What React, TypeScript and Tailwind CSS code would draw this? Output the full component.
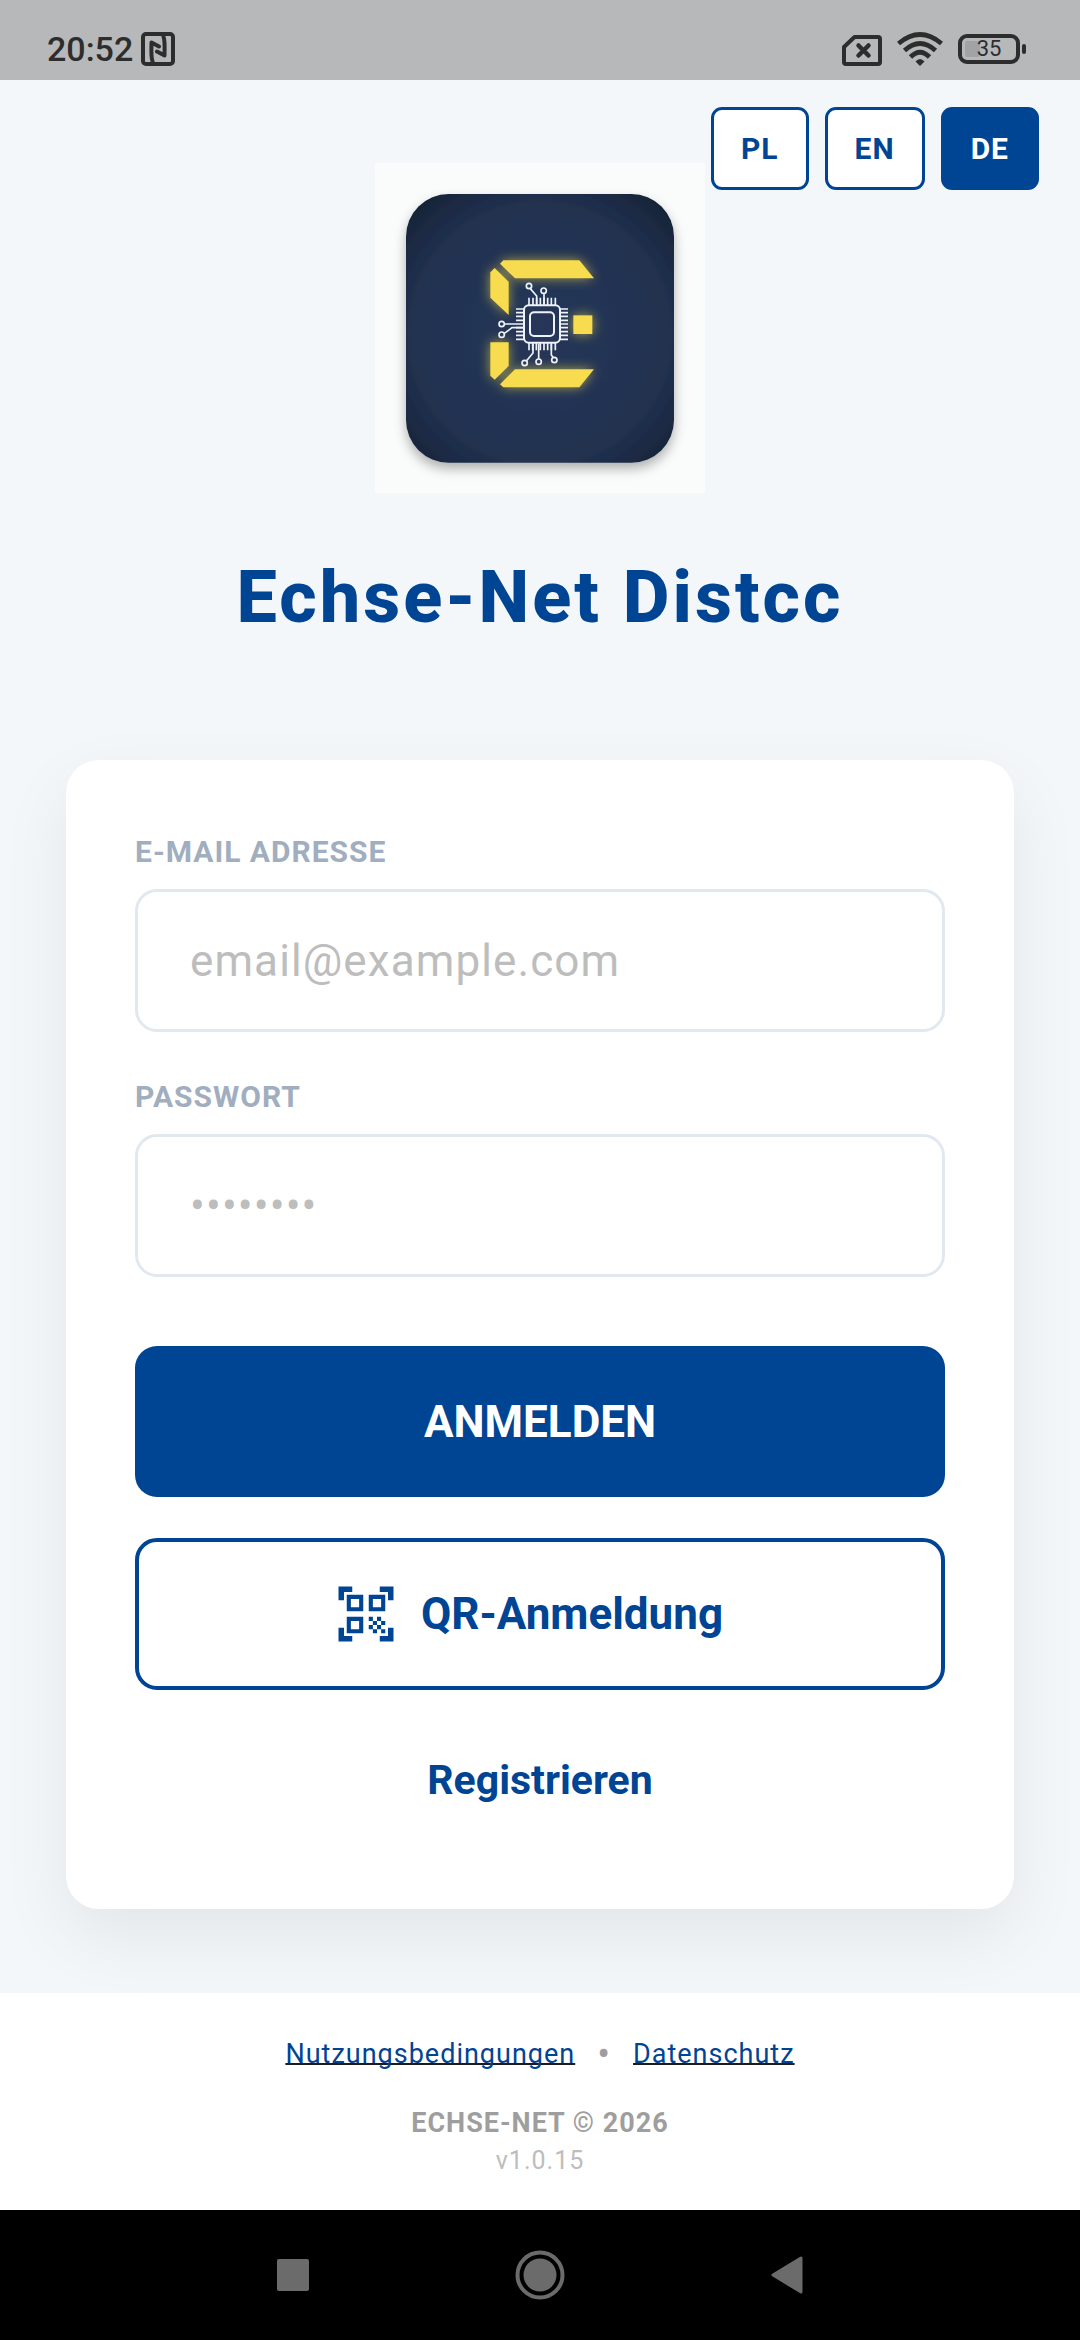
import { useState } from "react";
import { MdQrCodeScanner } from "react-icons/md";

const languages = ["PL", "EN", "DE"];

function StatusBar() {
  return (
    <header className="flex h-20 items-center justify-between bg-[#b7b8ba] pl-[47px] pr-[54px] pt-[18px] text-[#2d2d2d]">
      <div className="flex items-center gap-2">
        <span className="text-[34px] font-medium leading-10">20:52</span>
        <svg className="size-[34px]" viewBox="0 0 34 34" fill="none" stroke="currentColor" aria-label="NFC">
          <rect x="2" y="2" width="30" height="30" rx="3" strokeWidth="4" />
          <path d="M12.500 32 C9.500 27 10.500 20 10.500 10.500 L18 14.500 M21.500 2 C24.500 7 23.500 14 23.500 23.500 L16 19.500" strokeWidth="4" strokeLinejoin="round" strokeLinecap="round" />
        </svg>
      </div>
      <div className="flex items-center gap-[15px]">
        <svg className="h-[34px] w-10" viewBox="0 0 40 34" fill="none" stroke="currentColor" aria-label="Keine SIM">
          <path d="M12.500 5 H36 Q38 5 38 7 V30 Q38 32 36 32 H4 Q2 32 2 30 V15 Z" strokeWidth="4" strokeLinejoin="round" />
          <path d="M16.500 13.500 L26.500 23.500 M26.500 13.500 L16.500 23.500" strokeWidth="4.500" strokeLinecap="round" />
        </svg>
        <svg className="h-[34px] w-[46px]" viewBox="0 0 46 34" fill="none" stroke="currentColor" aria-label="WLAN">
          <g strokeWidth="4.800">
            <path d="M1.500 11.500 Q23 -6.500 44.500 11.500" />
            <path d="M7.500 18.500 Q23 4.500 38.500 18.500" />
            <path d="M13.500 25 Q23 15.500 32.500 25" />
          </g>
          <path d="M18.500 29.500 Q23 24.500 27.500 29.500 L23 34 Z" fill="currentColor" stroke="none" />
        </svg>
        <div className="flex items-center gap-[2px]">
          <div className="relative flex h-[30px] w-[62px] items-center justify-center rounded-[9px] border-4 border-[#2d2d2d]">
            <div className="absolute left-[3px] h-4 w-[15px] rounded-[2px] bg-[#a2a3a4]" />
            <span className="relative text-[22px] leading-6">35</span>
          </div>
          <div className="h-[10px] w-1 rounded-[2px] bg-[#2d2d2d]" />
        </div>
      </div>
    </header>
  );
}

function Logo() {
  return (
    <svg className="size-[330px]" viewBox="45 38 990 990" role="img" aria-label="Echse-Net Logo">
      <defs>
        <radialGradient id="tile" cx="50%" cy="52%" r="70%">
          <stop offset="0" stopColor="#263759" />
          <stop offset="0.680" stopColor="#213150" />
          <stop offset="0.860" stopColor="#1a2840" />
          <stop offset="1" stopColor="#14202e" />
        </radialGradient>
        <filter id="drop" x="-20%" y="-20%" width="140%" height="140%">
          <feDropShadow dx="0" dy="18" stdDeviation="18" floodColor="#000" floodOpacity="0.300" />
        </filter>
        <filter id="glow" x="-30%" y="-30%" width="160%" height="160%">
          <feGaussianBlur stdDeviation="17" />
        </filter>
        <g id="segments">
          <path d="M430 330 H658 L702 384 H465 L420 340 Z" />
          <path d="M404 353 L446 394 V494 L391 442 V366 Z" />
          <path d="M391 576 H446 V647 L404 688 L391 676 Z" />
          <path d="M465 657 H702 L658 711 H430 L420 702 Z" />
          <path d="M640 495 H697 V551 H640 Z" />
        </g>
      </defs>
      <rect x="45" y="38" width="990" height="990" fill="#fafbfb" />
      <rect x="138" y="131" width="804" height="806" rx="128" fill="url(#tile)" filter="url(#drop)" />
      <use href="#segments" fill="#e8cf45" opacity="0.700" filter="url(#glow)" />
      <use href="#segments" fill="#f6dc4e" />
      <g fill="none" stroke="#eef2fa" strokeWidth="6">
        <rect x="492" y="465" width="108" height="112" rx="14" />
        <rect x="510" y="486" width="72" height="71" rx="12" />
        <path d="M507 442V465M519 442V465M530 442V465M541 442V465M552 442V465M563 442V465M574 442V465M586 442V465" strokeWidth="5" />
        <path d="M507 577V600M518 577V600M529 577V600M541 577V600M552 577V600M563 577V600M574 577V600M586 577V600" strokeWidth="5" />
        <path d="M468 476H492M468 487H492M468 498H492M468 510H492M468 544H492M468 555H492M468 567H492M468 532H492" strokeWidth="5" />
        <path d="M600 476H624M600 487H624M600 498H624M600 510H624M600 521H624M600 532H624M600 544H624M600 555H624M600 567H624" strokeWidth="5" />
        <g strokeWidth="5">
          <path d="M530 462 V437 L511 415 M552 462 V430 M492 521 H434 M492 532 H456 L432 550" />
          <path d="M519 580 V608 L499 632 M536 580 V626 M574 580 V614 L580 622" />
          <circle cx="507" cy="407" r="8" />
          <circle cx="551" cy="421" r="8" />
          <circle cx="425" cy="521" r="8" />
          <circle cx="425" cy="553" r="8" />
          <circle cx="494" cy="638" r="8" />
          <circle cx="536" cy="634" r="8" />
          <circle cx="583" cy="629" r="8" />
        </g>
      </g>
    </svg>
  );
}

function Field({ id, label, type, placeholder }: { id: string; label: string; type: string; placeholder: string }) {
  return (
    <div className="flex flex-col gap-[19px]">
      <label htmlFor={id} className="text-[30px] font-bold leading-9 tracking-[1px] text-[#a0aec0]">
        {label}
      </label>
      <input
        id={id}
        type={type}
        placeholder={placeholder}
        className="h-[143px] w-full rounded-[22px] border-3 border-[#e2e8f0] bg-white px-[52px] text-[44px] tracking-wide text-gray-800 outline-none placeholder:text-[#bdbdbd] focus:border-[#004494]"
      />
    </div>
  );
}

function SystemNav() {
  return (
    <nav className="flex h-[130px] items-center justify-center gap-[197px] bg-black text-[#6b6b6b]" aria-label="System">
      <button type="button" aria-label="Übersicht" className="flex size-[50px] items-center justify-center">
        <svg className="size-8" viewBox="0 0 32 32">
          <rect width="32" height="32" rx="2" fill="currentColor" />
        </svg>
      </button>
      <button type="button" aria-label="Startbildschirm">
        <svg className="size-[50px]" viewBox="0 0 50 50">
          <circle cx="25" cy="25" r="22.500" fill="none" stroke="currentColor" strokeWidth="4" />
          <circle cx="25" cy="25" r="16.500" fill="currentColor" />
        </svg>
      </button>
      <button type="button" aria-label="Zurück" className="flex size-[50px] items-center justify-center">
        <svg className="h-[38px] w-8" viewBox="0 0 32 38">
          <path d="M2 19 L30 2 V36 Z" fill="currentColor" stroke="currentColor" strokeWidth="3" strokeLinejoin="round" />
        </svg>
      </button>
    </nav>
  );
}

export default function App() {
  const [language, setLanguage] = useState("DE");

  return (
    <div className="flex min-h-screen flex-col bg-[#f3f7fa] font-[Roboto,sans-serif]">
      <StatusBar />
      <main className="relative flex flex-1 flex-col items-center px-[66px] pb-[84px] pt-[83px]">
        <div className="absolute right-[41px] top-[27px] flex gap-4" role="group" aria-label="Sprache">
          {languages.map((code) => (
            <button
              key={code}
              type="button"
              aria-pressed={code === language}
              onClick={() => setLanguage(code)}
              className={
                code === language
                  ? "h-[83px] rounded-[11px] border-3 border-[#004494] bg-[#004494] px-[27px] text-[30px] font-bold tracking-[1px] text-white"
                  : "h-[83px] rounded-[11px] border-3 border-[#004494] bg-white px-[27px] text-[30px] font-bold tracking-[1px] text-[#004494]"
              }
            >
              {code}
            </button>
          ))}
        </div>
        <Logo />
        <h1 className="mt-[63px] text-[72px] font-extrabold leading-[84px] tracking-[3px] text-[#004494]">Echse-Net Distcc</h1>
        <form
          className="mt-[120px] flex w-full flex-col rounded-[33px] bg-white px-[69px] pb-[105px] pt-[74px] shadow-[0_28px_72px_rgba(0,0,0,0.07)]"
          onSubmit={(event) => event.preventDefault()}
        >
          <div className="flex flex-col gap-[47px]">
            <Field id="email" label="E-MAIL ADRESSE" type="email" placeholder="email@example.com" />
            <Field id="password" label="PASSWORT" type="password" placeholder="••••••••" />
          </div>
          <button type="submit" className="mt-[69px] h-[151px] rounded-[22px] bg-[#004494] text-[44px] font-bold text-white">
            ANMELDEN
          </button>
          <button
            type="button"
            className="mt-[41px] flex h-[152px] items-center justify-center gap-[22px] rounded-[22px] border-4 border-[#004494] bg-white pr-6 text-[44px] font-bold text-[#004494]"
          >
            <MdQrCodeScanner className="size-[66px]" aria-hidden="true" />
            QR-Anmeldung
          </button>
          <button type="button" className="mt-[66px] self-center text-[41px] font-bold leading-[48px] text-[#004494]">
            Registrieren
          </button>
        </form>
      </main>
      <footer className="relative flex flex-col items-center bg-white pb-[35px] pt-[45px]">
        <div className="flex items-center gap-[22px] text-[27px] leading-8 tracking-[1px]">
          <a href="#nutzungsbedingungen" className="text-[#004494] underline decoration-[#1d1b20] decoration-2 underline-offset-0 [text-decoration-skip-ink:none]">
            Nutzungsbedingungen
          </a>
          <span className="text-[38px] leading-8 text-[#9e9e9e]">•</span>
          <a href="#datenschutz" className="text-[#004494] underline decoration-[#1d1b20] decoration-2 underline-offset-0 [text-decoration-skip-ink:none]">
            Datenschutz
          </a>
        </div>
        <p className="mt-[37px] text-[27px] font-bold leading-8 tracking-[1px] text-[#9e9e9e]">ECHSE-NET © 2026</p>
        <p className="mt-2 text-[25px] leading-7 tracking-[1px] text-[#bdbdbd]">v1.0.15</p>
      </footer>
      <SystemNav />
    </div>
  );
}
